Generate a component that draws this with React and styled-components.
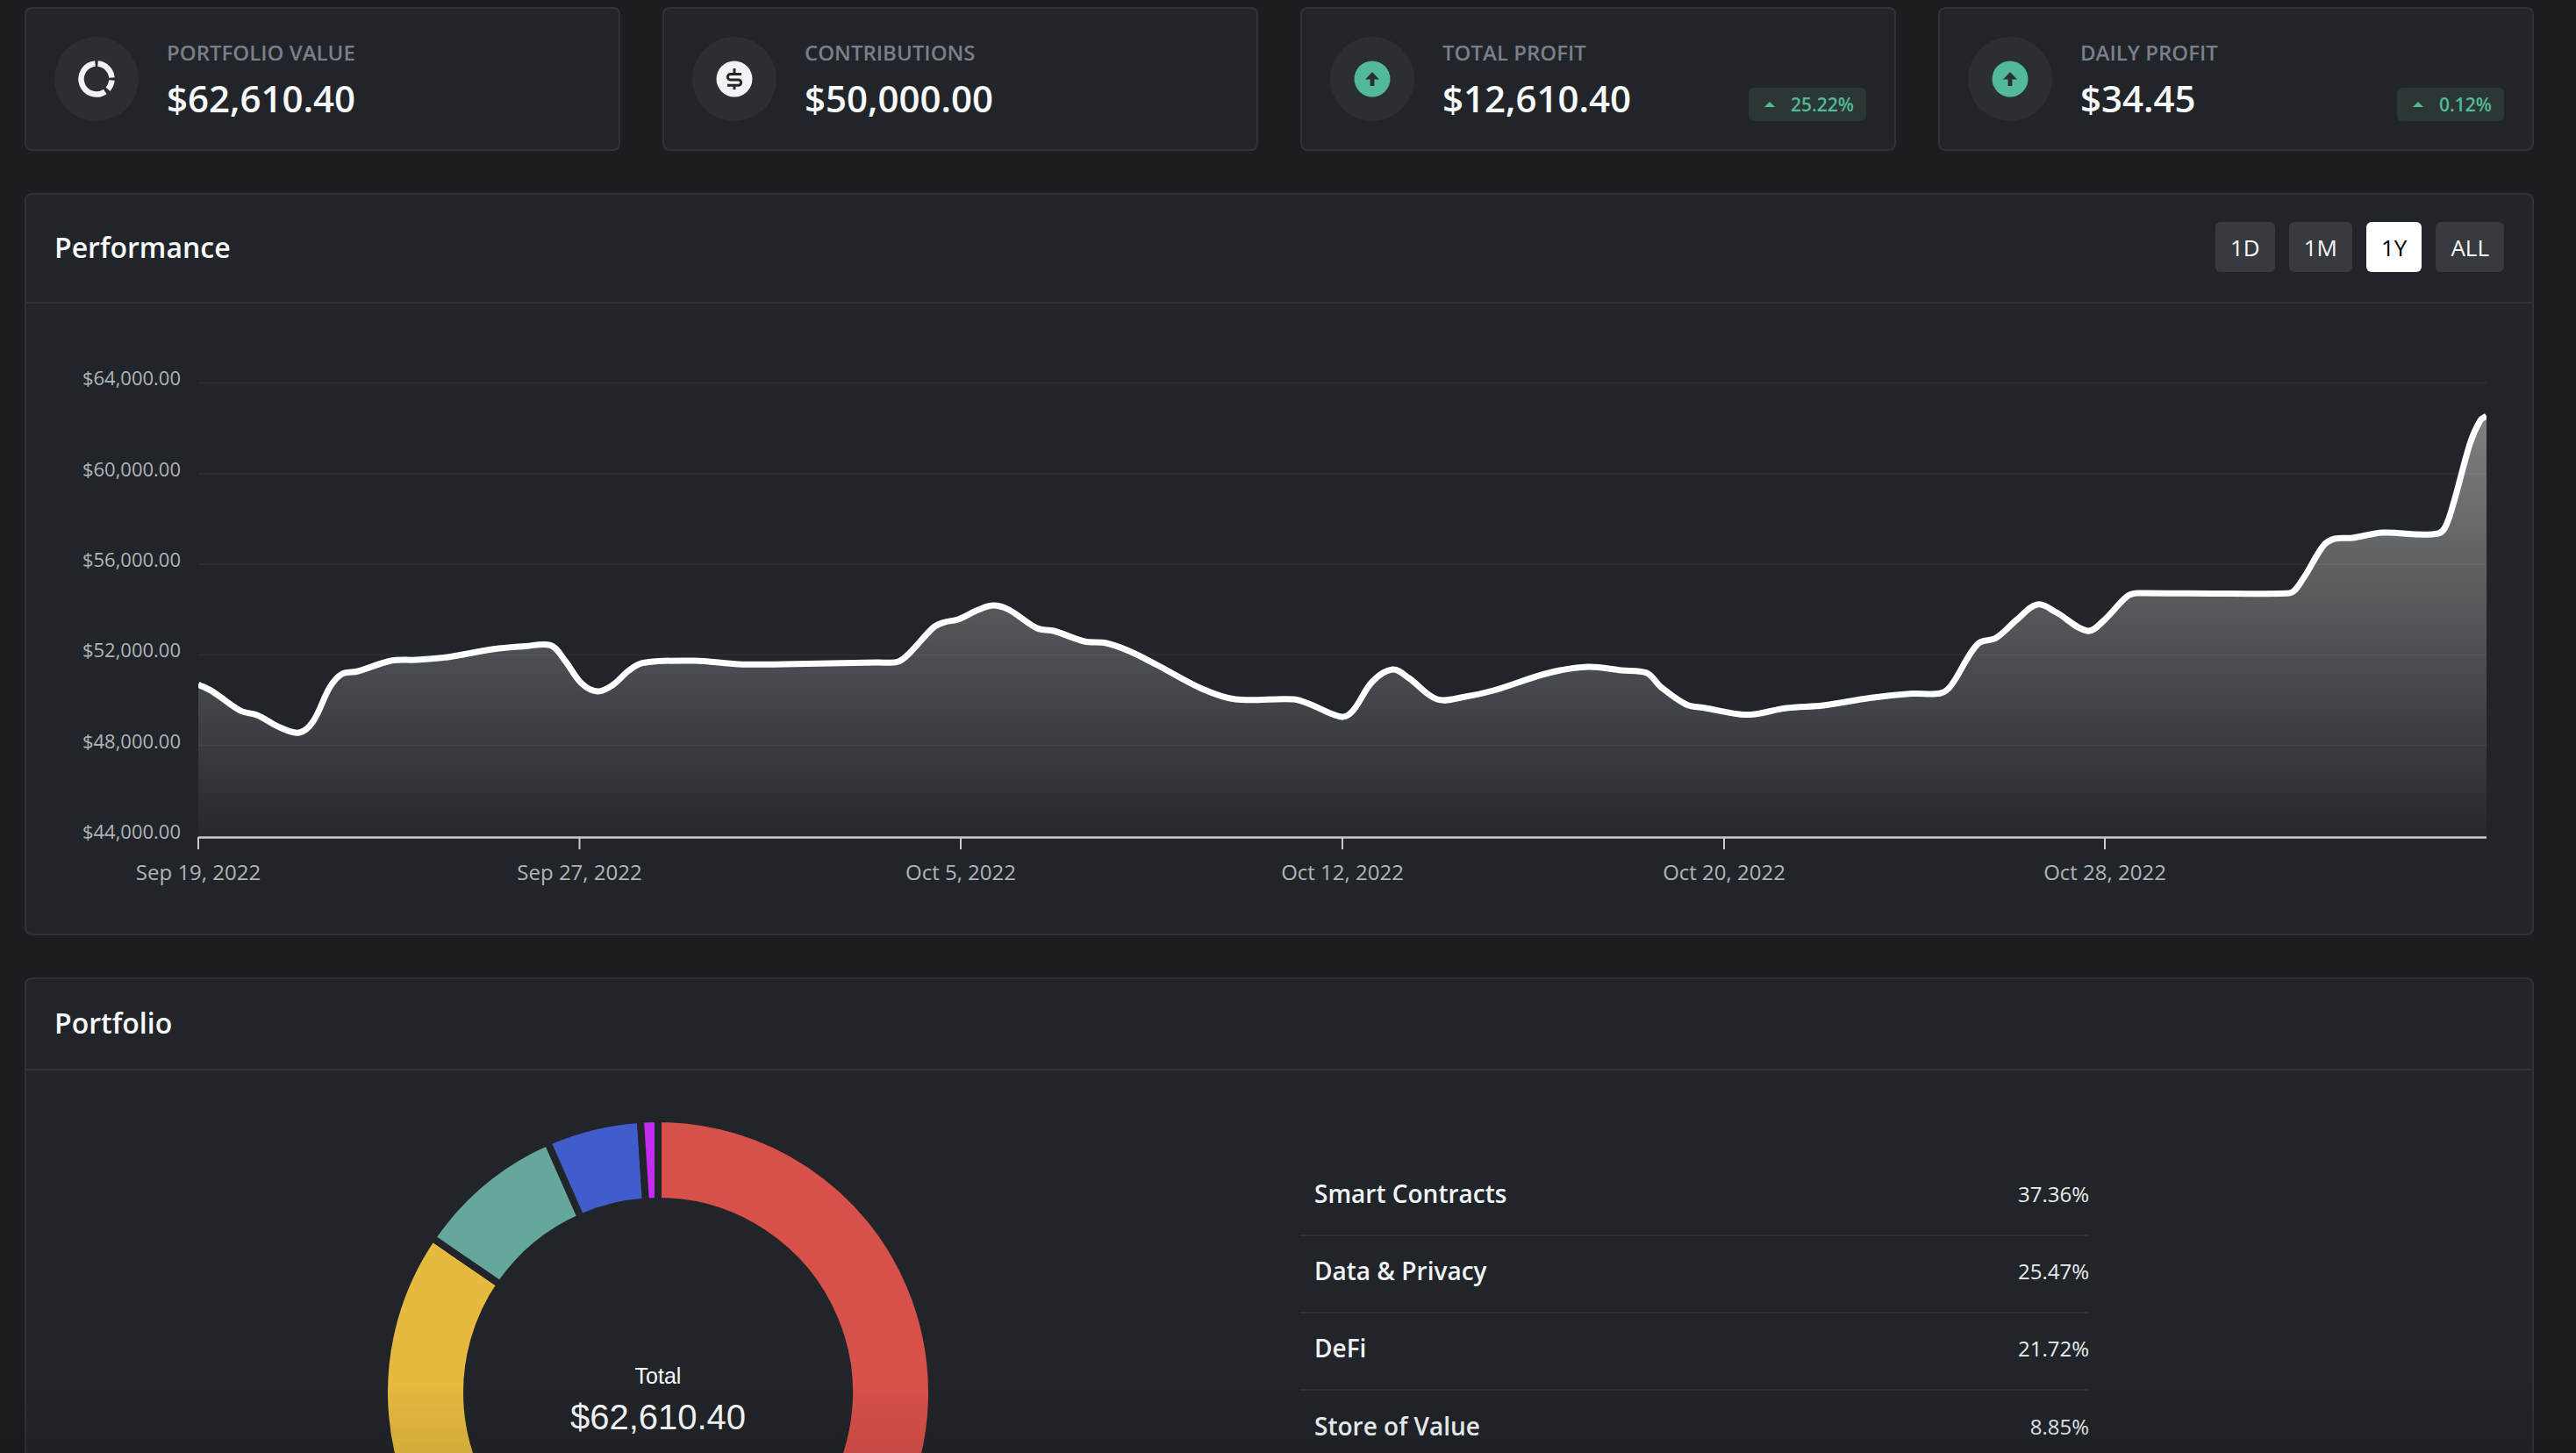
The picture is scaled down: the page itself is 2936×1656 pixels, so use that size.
import React from "react";
import styled, { createGlobalStyle } from "styled-components";

const GlobalStyle = createGlobalStyle`
  html, body {
    margin: 0;
    height: 100%;
    overflow: hidden;
    background: #1b1d21;
  }
  body {
    font-family: "Open Sans", "Noto Sans", sans-serif;
    color: #f8f9fa;
  }
`;

const Page = styled.div`
  padding: 8px 48px 0 28px;
  display: flex;
  flex-direction: column;
  gap: 48px;
`;

const BottomFade = styled.div`
  position: fixed;
  left: 0;
  right: 0;
  bottom: 0;
  height: 80px;
  pointer-events: none;
  background: linear-gradient(to bottom, rgba(0, 0, 0, 0), rgba(0, 0, 0, 0.08));
`;

const SummaryRow = styled.div`
  display: grid;
  grid-template-columns: repeat(4, 679px);
  gap: 48px;
`;

const Card = styled.div`
  box-sizing: border-box;
  height: 164px;
  padding: 32px;
  display: flex;
  align-items: center;
  gap: 32px;
  background: #212529;
  border: 2px solid #2f3338;
  border-radius: 8px;
`;

const IconCircle = styled.div`
  width: 96px;
  height: 96px;
  flex: none;
  border-radius: 50%;
  background: #2b2e33;
  display: flex;
  align-items: center;
  justify-content: center;
`;

const CardText = styled.div`
  flex: 1;
  display: flex;
  flex-direction: column;
  gap: 8px;
  padding-top: 4px;
`;

const CardLabel = styled.div`
  font-size: 24px;
  line-height: 32px;
  font-weight: 600;
  color: #7b7e8b;
  white-space: nowrap;
`;

const CardValue = styled.div`
  font-size: 42px;
  line-height: 56px;
  font-weight: 600;
  color: #f8f9fa;
  white-space: nowrap;
`;

const Badge = styled.div`
  align-self: flex-end;
  height: 38px;
  padding: 0 14px 0 18px;
  display: flex;
  align-items: center;
  gap: 18px;
  font-size: 21px;
  font-weight: 600;
  color: #52b99a;
  background: #2a3735;
  border-radius: 6px;
`;

const Caret = styled.span`
  width: 0;
  height: 0;
  border-left: 6px solid transparent;
  border-right: 6px solid transparent;
  border-bottom: 6px solid #52b99a;
`;

const Panel = styled.section`
  box-sizing: border-box;
  background: #212529;
  border: 2px solid #2f3338;
  border-radius: 8px;
`;

const PanelHeader = styled.header`
  box-sizing: border-box;
  height: ${(p) => p.$height}px;
  padding: 0 32px 3px;
  display: flex;
  align-items: center;
  justify-content: space-between;
  border-bottom: 2px solid #2f3338;
`;

const PanelTitle = styled.h2`
  margin: 0;
  font-size: 32px;
  font-weight: 600;
  color: #f8f9fa;
`;

const RangeGroup = styled.div`
  display: flex;
  gap: 16px;
`;

const RangeButton = styled.button`
  height: 57px;
  padding: 0 17px;
  border: none;
  border-radius: 6px;
  font-family: inherit;
  font-size: 26px;
  color: ${(p) => (p.$active ? "#000" : "#f8f9fa")};
  background: ${(p) => (p.$active ? "#fff" : "#373a3e")};
`;

const ChartSvg = styled.svg`
  display: block;
  width: 2856px;
  height: 718px;
`;

const PortfolioBody = styled.div`
  display: grid;
  grid-template-columns: 1440px 1fr;
`;

const DonutCell = styled.div`
  padding-top: 47px;
  display: flex;
  justify-content: center;
`;

const DonutSvg = styled.svg`
  display: block;
  width: 640px;
  height: 640px;
`;

const TableList = styled.div`
  width: 899px;
  margin: 101px 0 0 12px;
`;

const TableRow = styled.div`
  box-sizing: border-box;
  height: 88px;
  padding: 0 0 8px 16px;
  display: flex;
  align-items: center;
  justify-content: space-between;
  border-bottom: 2px solid #2f3338;
  &:last-child {
    border-bottom: none;
  }
`;

const RowName = styled.span`
  font-size: 28px;
  font-weight: 600;
  color: #f1f3f5;
`;

const RowPct = styled.span`
  font-size: 24px;
  color: #e9ecef;
`;

const linePoints = [
  [226,780],[242,788],[274,810],[293,815],[319,829],[341,835],[357,822],[376,783],[390,768],[408,765],
  [446,753],[475,752],[510,749],[561,740],[599,736.5],[628,735.6],[644,753],[663,779],[681,788],[698,781],
  [717,764],[733,755.5],[791,753],[842,757],[893,757],[1000,755],[1024,754],[1038,743],[1064,715],[1077,709],
  [1092,706],[1115,695],[1132,690],[1150,695],[1182,716],[1201,719],[1236,731],[1261,733],[1287,742],[1319,758],
  [1370,785],[1408,797],[1475,797],[1494,803],[1529,817],[1542,810],[1564,777],[1587,763],[1606,773],[1638,797],
  [1670,794],[1702,787],[1765,767],[1810,760],[1848,764],[1877,767],[1893,783],[1922,803],[1944,807],[1982,814],
  [2000,814],[2036,807],[2078,804],[2131,795.5],[2179,790.6],[2212,790],[2224,781],[2254,734],[2275,727],[2299,706],
  [2322,689],[2343,697.5],[2379,719],[2397,708],[2424,680],[2436,676],[2609,676],[2624,661],[2648,622],[2661,614],
  [2681,613],[2716,607],[2779,608],[2791,591],[2815,506],[2827,479],[2834,474],
];

// handle length follows each segment, so the long flat runs don't overshoot
const smoothPath = (pts) => {
  const dirAt = (i) => {
    const a = pts[i - 1] || pts[i];
    const b = pts[i + 1] || pts[i];
    const dx = b[0] - a[0];
    const dy = b[1] - a[1];
    const len = Math.hypot(dx, dy);
    return [dx / len, dy / len];
  };
  let d = `M${pts[0][0]},${pts[0][1]}`;
  for (let i = 0; i < pts.length - 1; i++) {
    const p1 = pts[i];
    const p2 = pts[i + 1];
    const h = Math.min(Math.hypot(p2[0] - p1[0], p2[1] - p1[1]) / 3, 24);
    const [d1x, d1y] = dirAt(i);
    const [d2x, d2y] = dirAt(i + 1);
    const c1x = p1[0] + d1x * h;
    const c1y = p1[1] + d1y * h;
    const c2x = p2[0] - d2x * h;
    const c2y = p2[1] - d2y * h;
    d += `C${c1x.toFixed(1)},${c1y.toFixed(1)} ${c2x.toFixed(1)},${c2y.toFixed(1)} ${p2[0]},${p2[1]}`;
  }
  return d;
};

const grid = [
  { y: 436.4, label: "$64,000.00" },
  { y: 540, label: "$60,000.00" },
  { y: 643, label: "$56,000.00" },
  { y: 746.4, label: "$52,000.00" },
  { y: 849.6, label: "$48,000.00" },
];

const ticks = [
  { x: 226, label: "Sep 19, 2022" },
  { x: 660.5, label: "Sep 27, 2022" },
  { x: 1095, label: "Oct 5, 2022" },
  { x: 1530, label: "Oct 12, 2022" },
  { x: 1965, label: "Oct 20, 2022" },
  { x: 2399, label: "Oct 28, 2022" },
];

const PerformanceChart = () => {
  const line = smoothPath(linePoints);
  return (
    <ChartSvg viewBox="30 346 2856 718">
      <defs>
        <linearGradient id="areaFill" gradientUnits="userSpaceOnUse" x1="0" y1="474" x2="0" y2="954">
          <stop offset="0" stopColor="#fff" stopOpacity="0.42" />
          <stop offset="1" stopColor="#fff" stopOpacity="0.02" />
        </linearGradient>
        <clipPath id="plotClip">
          <rect x="226" y="420" width="2608" height="560" />
        </clipPath>
      </defs>
      <path d={`${line}L2834,954L226,954Z`} fill="url(#areaFill)" />
      {grid.map((g) => (
        <line key={g.y} x1="226" x2="2834" y1={g.y} y2={g.y} stroke="#fff" strokeOpacity="0.045" strokeWidth="2" />
      ))}
      <path d={line} fill="none" stroke="#fff" strokeWidth="7" clipPath="url(#plotClip)" />
      <line x1="226" x2="2834" y1="954.5" y2="954.5" stroke="#c9cccf" strokeWidth="2.5" />
      {ticks.map((t) => (
        <line key={t.x} x1={t.x} x2={t.x} y1="954" y2="968" stroke="#c9cccf" strokeWidth="2" />
      ))}
      <g fontFamily="'Open Sans', sans-serif" fill="#b0b4b8">
        {grid.map((g) => (
          <text key={g.label} x="206" y={g.y + 3} fontSize="22" textAnchor="end">{g.label}</text>
        ))}
        <text x="206" y="956" fontSize="22" textAnchor="end">$44,000.00</text>
        {ticks.map((t) => (
          <text key={t.label} x={t.x} y="1003" fontSize="24" textAnchor="middle">{t.label}</text>
        ))}
      </g>
    </ChartSvg>
  );
};

const donutSlices = [
  { from: 0, to: 134.5, color: "#d8504a" },
  { from: 134.5, to: 226.2, color: "#e6b93f" },
  { from: 226.2, to: 304.4, color: "#e6b93f" },
  { from: 304.4, to: 336.2, color: "#66a79c" },
  { from: 336.2, to: 356.3, color: "#415ccb" },
  { from: 356.3, to: 360, color: "#c22cf0" },
];

const polar = (r, deg) => {
  const a = (deg * Math.PI) / 180;
  return [320 + r * Math.sin(a), 320 - r * Math.cos(a)];
};

const slicePath = (from, to, outer, inner) => {
  const large = to - from > 180 ? 1 : 0;
  const [x1, y1] = polar(outer, from);
  const [x2, y2] = polar(outer, to);
  const [x3, y3] = polar(inner, to);
  const [x4, y4] = polar(inner, from);
  return `M${x1},${y1}A${outer},${outer} 0 ${large} 1 ${x2},${y2}L${x3},${y3}A${inner},${inner} 0 ${large} 0 ${x4},${y4}Z`;
};

const Donut = () => (
  <DonutSvg viewBox="0 0 640 640">
    {donutSlices.map((s) => (
      <path key={s.from} d={slicePath(s.from, s.to, 312, 218)} fill={s.color} stroke="#212529" strokeWidth="8" />
    ))}
    <g fontFamily="'Liberation Sans', Arial, sans-serif" fill="#f8f9fa" textAnchor="middle">
      <text x="320" y="310" fontSize="25">Total</text>
      <text x="320" y="362" fontSize="40">$62,610.40</text>
    </g>
  </DonutSvg>
);

function arc(from, to) {
  const r = 17.5;
  const pt = (deg) => {
    const a = (deg * Math.PI) / 180;
    return `${(22 + r * Math.sin(a)).toFixed(2)},${(22 - r * Math.cos(a)).toFixed(2)}`;
  };
  return `M${pt(from)}A${r},${r} 0 ${to - from > 180 ? 1 : 0} 1 ${pt(to)}`;
}

const RingIcon = () => (
  <svg width="44" height="44" viewBox="0 0 44 44" fill="none" stroke="#f1f3f5" strokeWidth="6.5">
    <path d={arc(5, 85)} />
    <path d={arc(95, 132)} />
    <path d={arc(146, 355)} />
  </svg>
);

const DollarIcon = () => (
  <svg width="42" height="42" viewBox="0 0 42 42">
    <circle cx="21" cy="21" r="20.5" fill="#f1f3f5" />
    <g fill="none" stroke="#23262b" strokeWidth="3">
      <path d="M29 15.5H16.5a3.2 3.2 0 0 0 0 6.4h9a3.2 3.2 0 0 1 0 6.4H13" />
      <path d="M21 9v5M21 28v5" />
    </g>
  </svg>
);

const UpIcon = () => (
  <svg width="42" height="42" viewBox="0 0 42 42">
    <circle cx="21" cy="21" r="20.5" fill="#52b99a" />
    <path d="M21 13l8 8.5h-5.6V29h-4.8v-7.5H13z" fill="#2b2e33" />
  </svg>
);

const summary = [
  { label: "PORTFOLIO VALUE", value: "$62,610.40", icon: <RingIcon /> },
  { label: "CONTRIBUTIONS", value: "$50,000.00", icon: <DollarIcon /> },
  { label: "TOTAL PROFIT", value: "$12,610.40", icon: <UpIcon />, change: "25.22%" },
  { label: "DAILY PROFIT", value: "$34.45", icon: <UpIcon />, change: "0.12%" },
];

const ranges = ["1D", "1M", "1Y", "ALL"];

const holdings = [
  { name: "Smart Contracts", pct: "37.36%" },
  { name: "Data & Privacy", pct: "25.47%" },
  { name: "DeFi", pct: "21.72%" },
  { name: "Store of Value", pct: "8.85%" },
];

const App = () => (
  <>
    <GlobalStyle />
    <Page>
      <SummaryRow>
        {summary.map((item) => (
          <Card key={item.label}>
            <IconCircle>{item.icon}</IconCircle>
            <CardText>
              <CardLabel>{item.label}</CardLabel>
              <CardValue>{item.value}</CardValue>
            </CardText>
            {item.change && (
              <Badge>
                <Caret />
                {item.change}
              </Badge>
            )}
          </Card>
        ))}
      </SummaryRow>
      <Panel>
        <PanelHeader $height={124}>
          <PanelTitle>Performance</PanelTitle>
          <RangeGroup>
            {ranges.map((r) => (
              <RangeButton key={r} $active={r === "1Y"}>{r}</RangeButton>
            ))}
          </RangeGroup>
        </PanelHeader>
        <PerformanceChart />
      </Panel>
      <Panel>
        <PanelHeader $height={104}>
          <PanelTitle>Portfolio</PanelTitle>
        </PanelHeader>
        <PortfolioBody>
          <DonutCell>
            <Donut />
          </DonutCell>
          <TableList>
            {holdings.map((h) => (
              <TableRow key={h.name}>
                <RowName>{h.name}</RowName>
                <RowPct>{h.pct}</RowPct>
              </TableRow>
            ))}
          </TableList>
        </PortfolioBody>
      </Panel>
      <BottomFade />
    </Page>
  </>
);

export default App;
